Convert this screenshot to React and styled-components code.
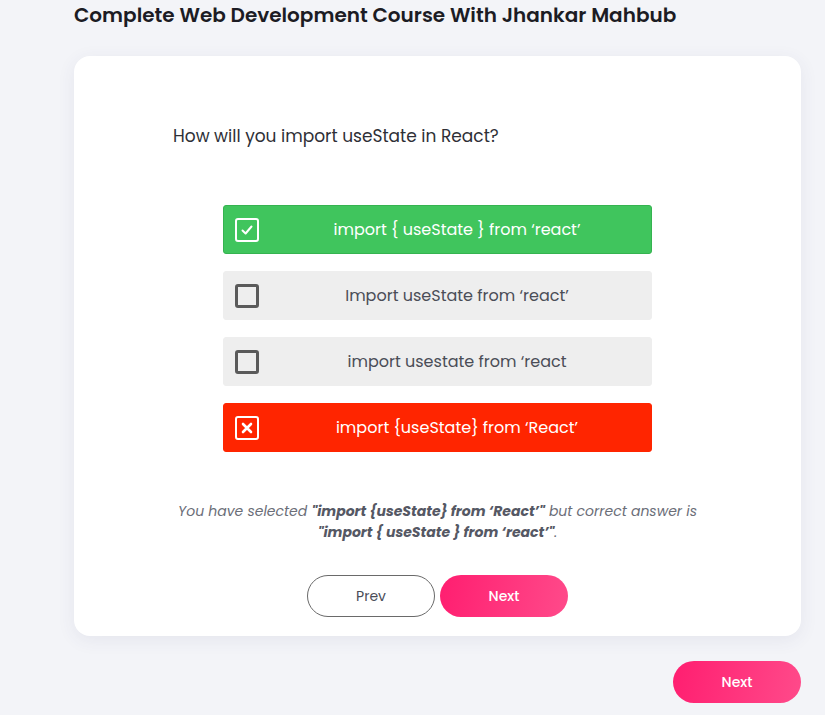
import React from "react";
import styled, { createGlobalStyle } from "styled-components";

const Global = createGlobalStyle`
  html, body { margin: 0; padding: 0; background: #f3f4f8; }
  body { font-family: "Poppins", "Open Sans", "DejaVu Sans", sans-serif; }
  * { box-sizing: border-box; }
`;

const Page = styled.div`
  width: 825px;
  height: 715px;
  overflow: hidden;
  padding-left: 74px;
`;

const Column = styled.div`
  width: 727px;
  display: flex;
  flex-direction: column;
`;

const Title = styled.h1`
  margin: 0;
  font-size: 20px;
  line-height: 30px;
  font-weight: 600;
  color: #1c1c24;
`;

const Card = styled.div`
  margin-top: 26px;
  background: #fff;
  border-radius: 16px;
  box-shadow: 0 4px 18px rgba(60, 70, 110, 0.08);
  padding: 68px 0 19px;
  display: flex;
  flex-direction: column;
  align-items: center;
`;

const Question = styled.p`
  align-self: flex-start;
  margin: 0 0 57px 99px;
  font-size: 17px;
  line-height: 24px;
  color: #2e2f36;
`;

const Options = styled.div`
  width: 429px;
  display: flex;
  flex-direction: column;
  gap: 17px;
`;

const bg = { correct: "#40c55d", wrong: "#ff2500", none: "#eeeeee" };
const bd = { correct: "#35b350", wrong: "#ff2500", none: "#eeeeee" };

const Option = styled.div`
  height: 49px;
  display: flex;
  align-items: center;
  padding-left: 11px;
  border-radius: 3px;
  background: ${(p) => bg[p.$state]};
  border: 1px solid ${(p) => bd[p.$state]};
  color: ${(p) => (p.$state === "none" ? "#4a4d57" : "#ffffff")};
`;

const Box = styled.span`
  width: 24px;
  height: 24px;
  flex: none;
  border-radius: 3px;
  border: ${(p) => (p.$state === "none" ? "3px solid #5a5a5a" : "2px solid #ffffff")};
  display: flex;
  align-items: center;
  justify-content: center;
`;

const OptionText = styled.span`
  flex: 1;
  text-align: center;
  font-size: 16px;
  line-height: 22px;
  padding-left: 4px;
`;

const Feedback = styled.p`
  margin: 49px 0 0;
  text-align: center;
  font-style: italic;
  font-size: 14px;
  line-height: 21px;
  color: #6b6e78;
  width: 560px;
  b { color: #555864; font-weight: 700; }
`;

const Buttons = styled.div`
  margin-top: 32px;
  display: flex;
  gap: 5px;
`;

const Btn = styled.button`
  width: 128px;
  height: 42px;
  border-radius: 21px;
  font-family: inherit;
  font-size: 14px;
  cursor: pointer;
  ${(p) =>
    p.$primary
      ? `background: linear-gradient(100deg, #ff1e70 0%, #ff4a8a 100%); color: #fff; border: none; font-weight: 500;`
      : `background: #fff; color: #4a4d57; border: 1px solid #6a6a6a;`}
`;

const Footer = styled.div`
  margin-top: 25px;
  display: flex;
  justify-content: flex-end;
`;

const Check = () => (
  <svg width="16" height="16" viewBox="0 0 16 16">
    <path d="M3.5 8.5 L6.6 11.5 L12.5 4.5" fill="none" stroke="#fff" strokeWidth="2" strokeLinecap="round" strokeLinejoin="round" />
  </svg>
);
const Cross = () => (
  <svg width="16" height="16" viewBox="0 0 16 16">
    <path d="M4 4 L12 12 M12 4 L4 12" fill="none" stroke="#fff" strokeWidth="2.6" strokeLinecap="round" />
  </svg>
);

const options = [
  { text: "import { useState } from ‘react’", state: "correct" },
  { text: "Import useState from ‘react’", state: "none" },
  { text: "import usestate from ‘react", state: "none" },
  { text: "import {useState} from ‘React’", state: "wrong" },
];

export default function App() {
  return (
    <Page>
      <Global />
      <Column>
        <Title>Complete Web Development Course With Jhankar Mahbub</Title>
        <Card>
          <Question>How will you import useState in React?</Question>
          <Options>
            {options.map((o) => (
              <Option key={o.text} $state={o.state}>
                <Box $state={o.state}>
                  {o.state === "correct" && <Check />}
                  {o.state === "wrong" && <Cross />}
                </Box>
                <OptionText>{o.text}</OptionText>
              </Option>
            ))}
          </Options>
          <Feedback>
            You have selected <b>"import {"{useState}"} from ‘React’"</b> but correct answer is{" "}
            <b>"import {"{ useState }"} from ‘react’"</b>.
          </Feedback>
          <Buttons>
            <Btn>Prev</Btn>
            <Btn $primary>Next</Btn>
          </Buttons>
        </Card>
        <Footer>
          <Btn $primary>Next</Btn>
        </Footer>
      </Column>
    </Page>
  );
}
